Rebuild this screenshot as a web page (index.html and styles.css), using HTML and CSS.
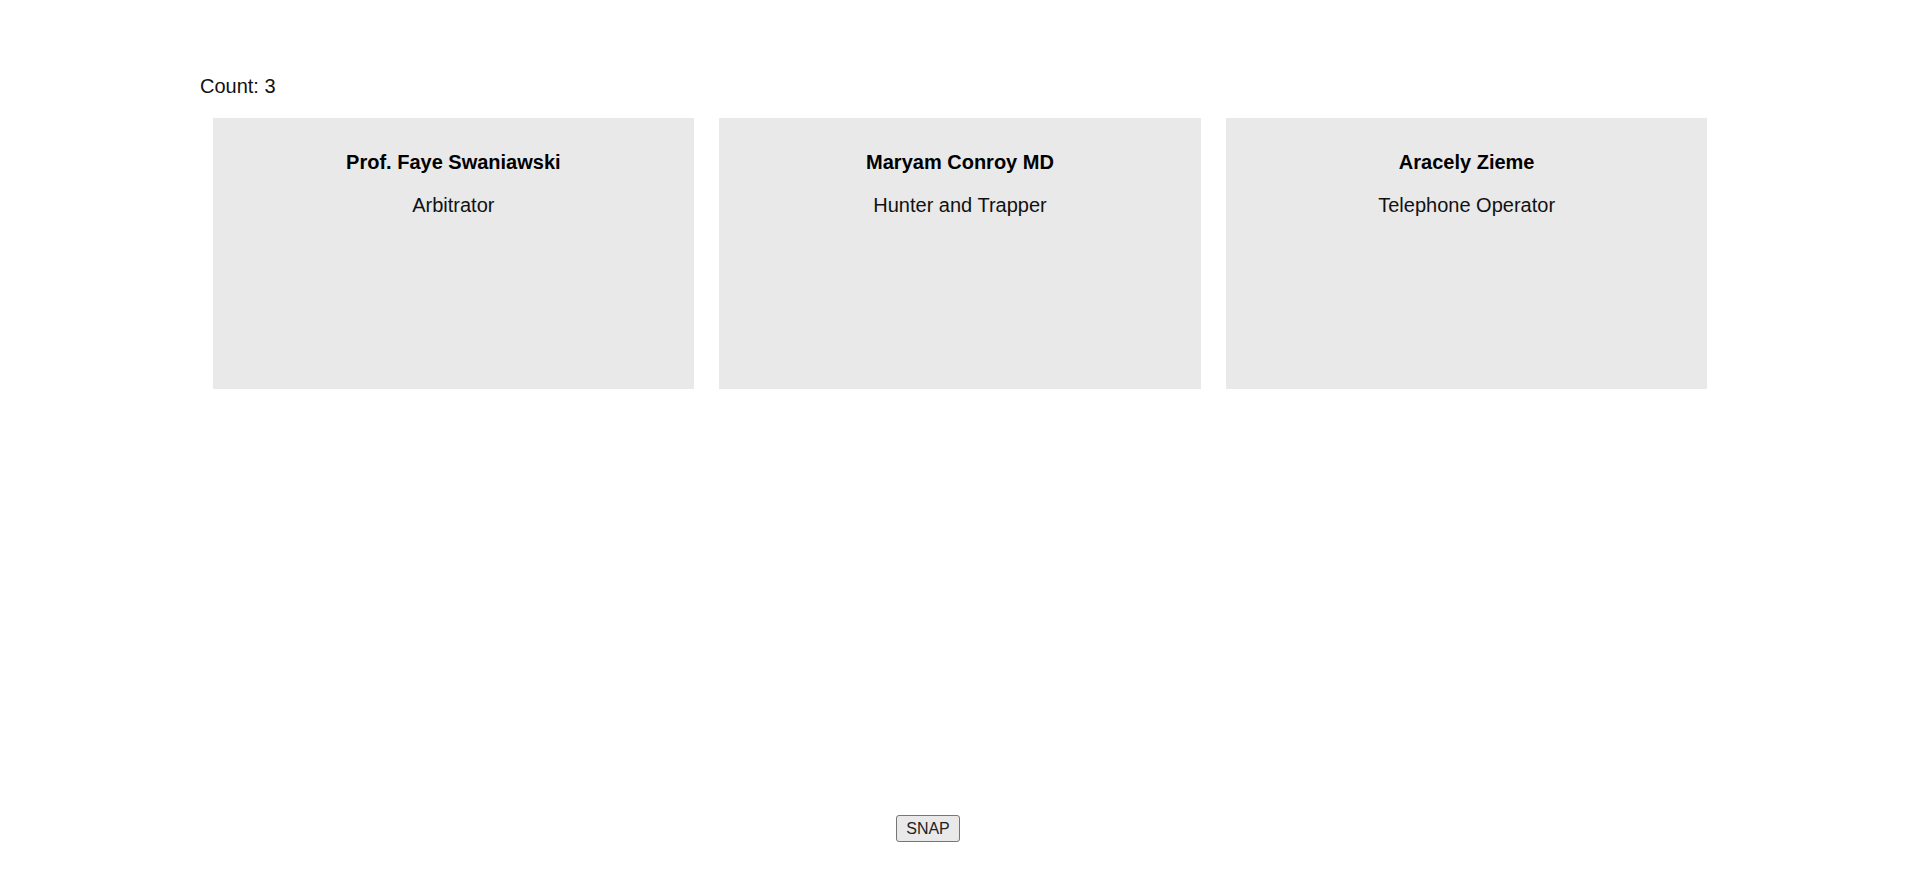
FILE: index.html
```html
<!DOCTYPE html>
<html>
<head>
<meta charset="utf-8">
<link rel="stylesheet" href="styles.css">
</head>
<body>
<div class="wrap">
  <div class="count">Count: 3</div>
  <div class="cards">
    <div class="card">
      <p class="name">Prof. Faye Swaniawski</p>
      <p class="job">Arbitrator</p>
    </div>
    <div class="card">
      <p class="name">Maryam Conroy MD</p>
      <p class="job">Hunter and Trapper</p>
    </div>
    <div class="card">
      <p class="name">Aracely Zieme</p>
      <p class="job">Telephone Operator</p>
    </div>
  </div>
</div>
<div class="footer">
  <button class="snap">SNAP</button>
</div>
</body>
</html>
```

FILE: styles.css
```css
html, body {
  margin: 0;
  padding: 0;
  background: #ffffff;
}
body {
  font-family: "Liberation Sans", Arial, sans-serif;
  color: #111111;
}
.wrap {
  width: 1520px;
  margin: 0 auto;
  padding-top: 75px;
}
.count {
  font-size: 20px;
  line-height: 23px;
}
.cards {
  display: grid;
  grid-template-columns: repeat(3, 1fr);
  gap: 25px;
  padding: 0 12.5px;
  margin-top: 20px;
}
.card {
  background: #e9e9e9;
  height: 271px;
  box-sizing: border-box;
  padding: 13px 10px;
  text-align: center;
}
.card p {
  margin: 20px 0;
  font-size: 20px;
  line-height: 23px;
}
.name {
  font-weight: bold;
  color: #000;
}
.job {
  color: #111;
}
.footer {
  padding-left: 896px;
  margin-top: 426px;
}
.snap {
  font-family: "Liberation Sans", Arial, sans-serif;
  font-size: 16px;
  line-height: 19px;
  height: 27px;
  width: 64px;
  padding: 0;
  color: #222;
  background: #e9e9e9;
  border: 1px solid #767676;
  border-radius: 3px;
}
```
